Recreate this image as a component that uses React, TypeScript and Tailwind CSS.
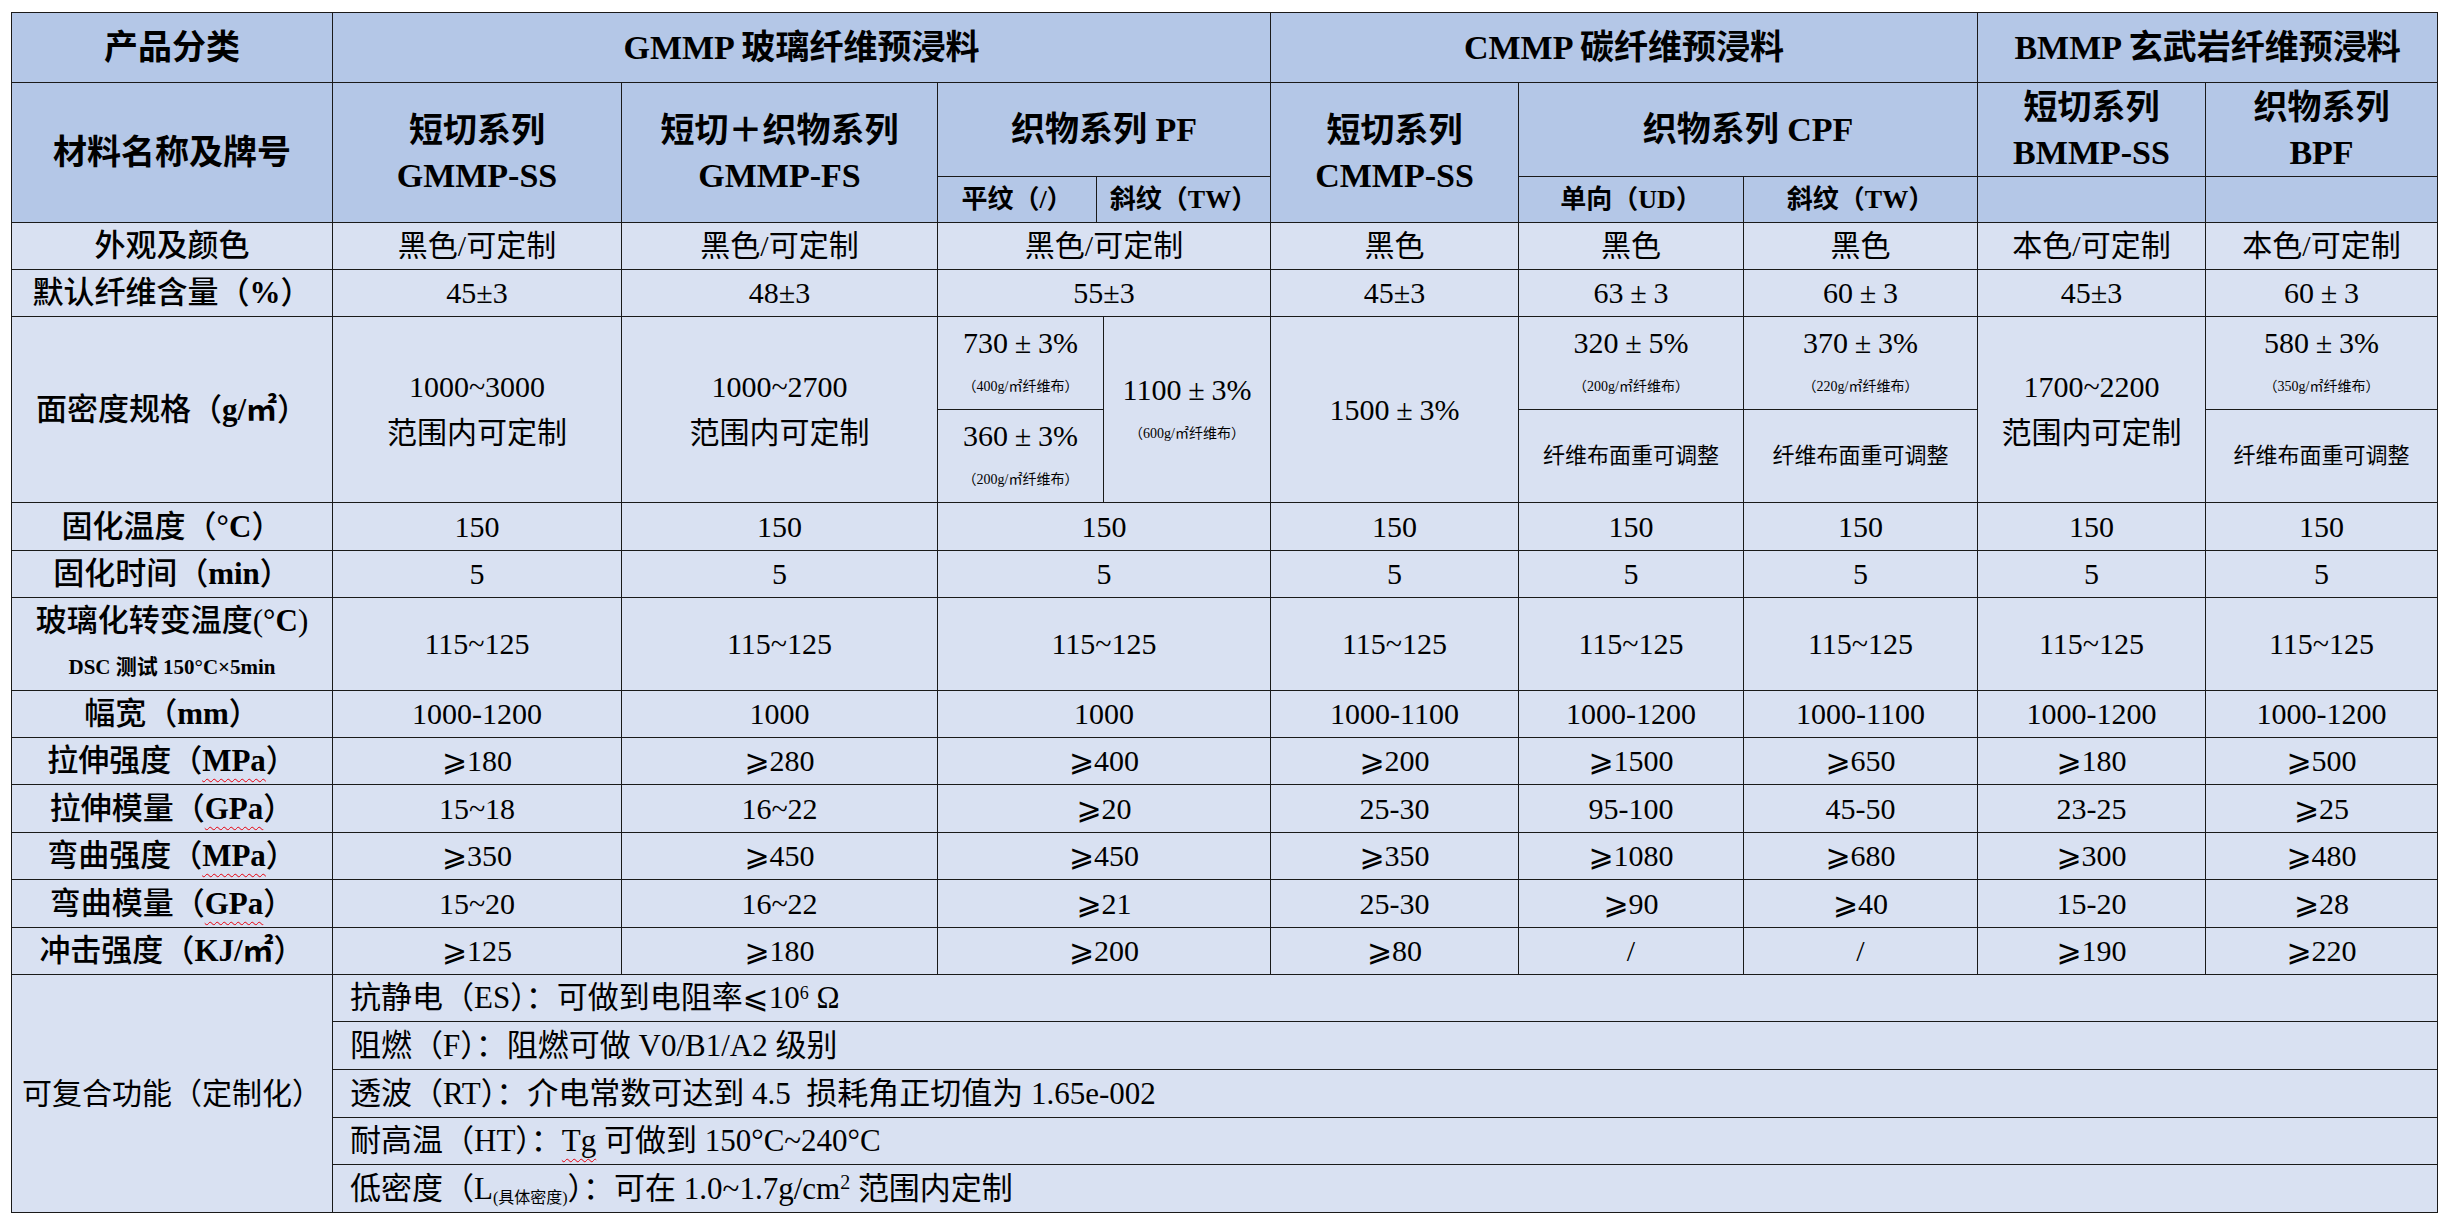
import type { ReactNode } from "react";

// 单元格样式（不含字号，避免类名冲突）
const headBase =
  "border-[1.5px] border-[#1a1a1a] p-0 text-center align-middle bg-[#B4C7E7] font-bold";
const bodyBase = "border-[1.5px] border-[#1a1a1a] p-0 align-middle bg-[#D9E1F2]";

const H1 = `${headBase} text-[34px] leading-[45px]`;
const H2 = `${headBase} text-[34px] leading-[45px]`;
const H3 = `${headBase} text-[26px] leading-[32px]`;
const VAL = `${bodyBase} text-center text-[30px] leading-[40px]`;
const SMALL = `${bodyBase} text-center text-[22px] leading-[30px]`;
const LABEL = `${bodyBase} text-center text-[31px] leading-[40px] font-medium`;
const FEAT_LABEL = `${bodyBase} text-center text-[30px] leading-[40px]`;
const FEAT = `${bodyBase} text-left pl-[17px] text-[31px] leading-[40px]`;

const Pm = () => <span className="inline-block w-[30px] text-center">±</span>;

const Wavy = ({ children }: { children: ReactNode }) => (
  <span className="underline decoration-wavy decoration-red-600 decoration-1 underline-offset-[7px]">
    {children}
  </span>
);

const Latin = ({ children }: { children: ReactNode }) => (
  <span className="font-bold">{children}</span>
);

const Sub = ({ children }: { children: ReactNode }) => (
  <div className="text-[14px] leading-[40px]">{children}</div>
);

type DataRow = {
  h: string;
  label: ReactNode;
  vals: ReactNode[];
};

const rows: DataRow[] = [
  {
    h: "h-[48px]",
    label: <>固化温度（<Latin>°C</Latin>）</>,
    vals: ["150", "150", "150", "150", "150", "150", "150", "150"],
  },
  {
    h: "h-[47px]",
    label: <>固化时间（<Latin>min</Latin>）</>,
    vals: ["5", "5", "5", "5", "5", "5", "5", "5"],
  },
  {
    h: "h-[93px]",
    label: (
      <>
        <div className="leading-[46px]">
          玻璃化转变温度(<Latin>°C</Latin>)
        </div>
        <div className="text-[21px] font-bold leading-[46px]">DSC 测试 150°C×5min</div>
      </>
    ),
    vals: ["115~125", "115~125", "115~125", "115~125", "115~125", "115~125", "115~125", "115~125"],
  },
  {
    h: "h-[47px]",
    label: <>幅宽（<Latin>mm</Latin>）</>,
    vals: ["1000-1200", "1000", "1000", "1000-1100", "1000-1200", "1000-1100", "1000-1200", "1000-1200"],
  },
  {
    h: "h-[47px]",
    label: (
      <>
        拉伸强度（<Latin><Wavy>MPa</Wavy></Latin>）
      </>
    ),
    vals: ["⩾180", "⩾280", "⩾400", "⩾200", "⩾1500", "⩾650", "⩾180", "⩾500"],
  },
  {
    h: "h-[48px]",
    label: (
      <>
        拉伸模量（<Latin><Wavy>GPa</Wavy></Latin>）
      </>
    ),
    vals: ["15~18", "16~22", "⩾20", "25-30", "95-100", "45-50", "23-25", "⩾25"],
  },
  {
    h: "h-[47px]",
    label: (
      <>
        弯曲强度（<Latin><Wavy>MPa</Wavy></Latin>）
      </>
    ),
    vals: ["⩾350", "⩾450", "⩾450", "⩾350", "⩾1080", "⩾680", "⩾300", "⩾480"],
  },
  {
    h: "h-[48px]",
    label: (
      <>
        弯曲模量（<Latin><Wavy>GPa</Wavy></Latin>）
      </>
    ),
    vals: ["15~20", "16~22", "⩾21", "25-30", "⩾90", "⩾40", "15-20", "⩾28"],
  },
  {
    h: "h-[47px]",
    label: <>冲击强度（<Latin>KJ/㎡</Latin>）</>,
    vals: ["⩾125", "⩾180", "⩾200", "⩾80", "/", "/", "⩾190", "⩾220"],
  },
];

const features: ReactNode[] = [
  <>
    抗静电（ES）：可做到电阻率⩽10<sup className="text-[18px]">6</sup> Ω
  </>,
  <>阻燃（F）：阻燃可做 V0/B1/A2 级别</>,
  <>透波（RT）：介电常数可达到 4.5&nbsp;&nbsp;损耗角正切值为 1.65e-002</>,
  <>
    耐高温（HT）：<Wavy>Tg</Wavy> 可做到 150°C~240°C
  </>,
  <>
    低密度（L<sub className="text-[16px]">(具体密度)</sub>）：可在 1.0~1.7g/cm<sup className="text-[20px]">2</sup> 范围内定制
  </>,
];

const featureHeights = ["h-[47px]", "h-[48px]", "h-[48px]", "h-[47px]", "h-[48px]"];

function ValueRow({ row }: { row: DataRow }) {
  return (
    <tr className={row.h}>
      <td className={LABEL}>{row.label}</td>
      {row.vals.map((v, i) => (
        <td key={i} colSpan={i === 2 ? 3 : 1} className={VAL}>
          {v}
        </td>
      ))}
    </tr>
  );
}

export default function App() {
  return (
    <div className="min-h-screen bg-white pt-[12px] pl-[11px] font-['Liberation_Serif','Noto_Sans_CJK_SC','DejaVu_Sans',serif] text-black">
      <table className="w-[2426px] table-fixed border-collapse">
        <colgroup>
          <col className="w-[321px]" />
          <col className="w-[289px]" />
          <col className="w-[316px]" />
          <col className="w-[159px]" />
          <col className="w-[7px]" />
          <col className="w-[167px]" />
          <col className="w-[248px]" />
          <col className="w-[225px]" />
          <col className="w-[234px]" />
          <col className="w-[228px]" />
          <col className="w-[232px]" />
        </colgroup>
        <tbody>
          {/* 产品分类 */}
          <tr className="h-[70px]">
            <th className={H1}>产品分类</th>
            <th colSpan={5} className={H1}>
              GMMP 玻璃纤维预浸料
            </th>
            <th colSpan={3} className={H1}>
              CMMP 碳纤维预浸料
            </th>
            <th colSpan={2} className={H1}>
              BMMP 玄武岩纤维预浸料
            </th>
          </tr>

          {/* 材料名称及牌号 */}
          <tr className="h-[94px]">
            <th rowSpan={2} className={H2}>
              材料名称及牌号
            </th>
            <th rowSpan={2} className={H2}>
              短切系列
              <br />
              GMMP-SS
            </th>
            <th rowSpan={2} className={H2}>
              短切＋织物系列
              <br />
              GMMP-FS
            </th>
            <th colSpan={3} className={H2}>
              织物系列 PF
            </th>
            <th rowSpan={2} className={H2}>
              短切系列
              <br />
              CMMP-SS
            </th>
            <th colSpan={2} className={H2}>
              织物系列 CPF
            </th>
            <th className={H2}>
              短切系列
              <br />
              BMMP-SS
            </th>
            <th className={H2}>
              织物系列
              <br />
              BPF
            </th>
          </tr>
          <tr className="h-[46px]">
            <th className={H3}>平纹（/）</th>
            <th colSpan={2} className={H3}>
              斜纹（TW）
            </th>
            <th className={H3}>单向（UD）</th>
            <th className={H3}>斜纹（TW）</th>
            <th className={H3}></th>
            <th className={H3}></th>
          </tr>

          {/* 外观及颜色 */}
          <tr className="h-[47px]">
            <td className={LABEL}>外观及颜色</td>
            <td className={VAL}>黑色/可定制</td>
            <td className={VAL}>黑色/可定制</td>
            <td colSpan={3} className={VAL}>
              黑色/可定制
            </td>
            <td className={VAL}>黑色</td>
            <td className={VAL}>黑色</td>
            <td className={VAL}>黑色</td>
            <td className={VAL}>本色/可定制</td>
            <td className={VAL}>本色/可定制</td>
          </tr>

          {/* 默认纤维含量 */}
          <tr className="h-[47px]">
            <td className={LABEL}>
              默认纤维含量（<Latin>%</Latin>）
            </td>
            <td className={VAL}>45±3</td>
            <td className={VAL}>48±3</td>
            <td colSpan={3} className={VAL}>
              55±3
            </td>
            <td className={VAL}>45±3</td>
            <td className={VAL}>
              63<Pm />3
            </td>
            <td className={VAL}>
              60<Pm />3
            </td>
            <td className={VAL}>45±3</td>
            <td className={VAL}>
              60<Pm />3
            </td>
          </tr>

          {/* 面密度规格 */}
          <tr className="h-[93px]">
            <td rowSpan={2} className={LABEL}>
              面密度规格（<Latin>g/㎡</Latin>）
            </td>
            <td rowSpan={2} className={VAL}>
              <div className="leading-[46px]">1000~3000</div>
              <div className="leading-[46px]">范围内可定制</div>
            </td>
            <td rowSpan={2} className={VAL}>
              <div className="leading-[46px]">1000~2700</div>
              <div className="leading-[46px]">范围内可定制</div>
            </td>
            <td colSpan={2} className={VAL}>
              <div className="leading-[48px]">
                730<Pm />3%
              </div>
              <Sub>（400g/㎡纤维布）</Sub>
            </td>
            <td rowSpan={2} className={VAL}>
              <div className="leading-[48px]">
                1100<Pm />3%
              </div>
              <Sub>（600g/㎡纤维布）</Sub>
            </td>
            <td rowSpan={2} className={VAL}>
              1500<Pm />3%
            </td>
            <td className={VAL}>
              <div className="leading-[48px]">
                320<Pm />5%
              </div>
              <Sub>（200g/㎡纤维布）</Sub>
            </td>
            <td className={VAL}>
              <div className="leading-[48px]">
                370<Pm />3%
              </div>
              <Sub>（220g/㎡纤维布）</Sub>
            </td>
            <td rowSpan={2} className={VAL}>
              <div className="leading-[46px]">1700~2200</div>
              <div className="leading-[46px]">范围内可定制</div>
            </td>
            <td className={VAL}>
              <div className="leading-[48px]">
                580<Pm />3%
              </div>
              <Sub>（350g/㎡纤维布）</Sub>
            </td>
          </tr>
          <tr className="h-[93px]">
            <td colSpan={2} className={VAL}>
              <div className="leading-[48px]">
                360<Pm />3%
              </div>
              <Sub>（200g/㎡纤维布）</Sub>
            </td>
            <td className={SMALL}>纤维布面重可调整</td>
            <td className={SMALL}>纤维布面重可调整</td>
            <td className={SMALL}>纤维布面重可调整</td>
          </tr>

          {rows.map((r, i) => (
            <ValueRow key={i} row={r} />
          ))}

          {/* 可复合功能 */}
          {features.map((f, i) => (
            <tr key={i} className={featureHeights[i]}>
              {i === 0 && (
                <td rowSpan={5} className={FEAT_LABEL}>
                  可复合功能（定制化）
                </td>
              )}
              <td colSpan={10} className={FEAT}>
                {f}
              </td>
            </tr>
          ))}
        </tbody>
      </table>
    </div>
  );
}
